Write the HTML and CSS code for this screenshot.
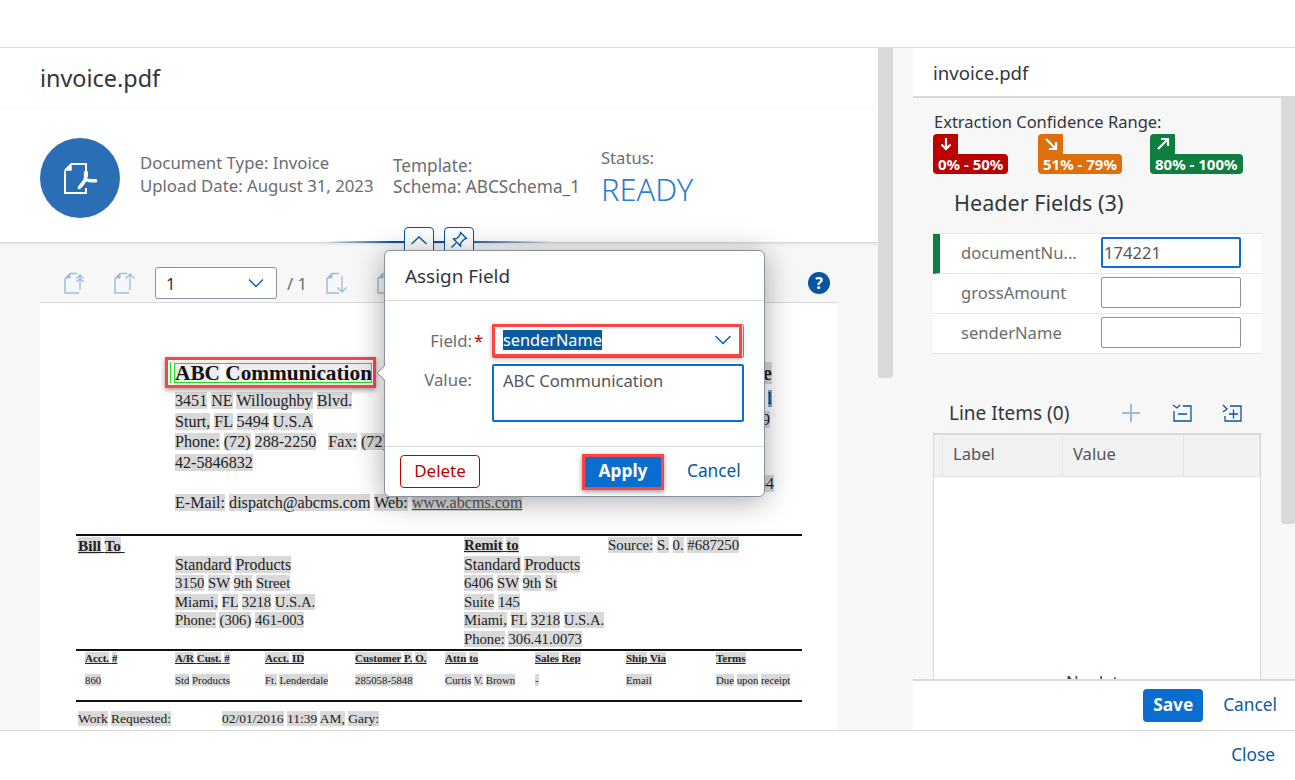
FILE: index.html
```html
<!DOCTYPE html>
<html lang="en">
<head>
    <meta charset="UTF-8">
    <title>invoice.pdf</title>
    <link rel="stylesheet" href="styles.css">
</head>
<body>
    <div class="dialog">
        <div class="dialog-header"></div>

        <div class="dialog-body">
            <div class="doc-pane">
                <div class="doc-title">invoice.pdf</div>

                <div class="object-header">
                    <div class="doc-avatar">
                        <svg width="36" height="34" viewBox="0 0 36 34">
                            <path d="M9 3h15v7M24 27v5H3V10" fill="none" stroke="#fff" stroke-width="2"/>
                            <path d="M3 9l6-6v6z" fill="#fff" stroke="#fff" stroke-width="1.500" stroke-linejoin="round"/>
                            <path d="M22.500 11.500c0-1.500 3-1.500 3 0 0 2-.4 4.500-.9 6.500 2.500 .5 6 .5 9 .5 1.500 0 1.500 2.500 0 2.500-3.500 0-7-.5-9.500-1.200-1.500 2.500-4 6-6 7.500-1.500 1-2.500-.5-1.500-1.500 1.500-2 4-4.800 5.400-7.200 .5-2 .5-5 .5-7.100z" fill="#fff" stroke="#fff" stroke-width="1.200"/>
                        </svg>
                    </div>
                    <div class="info-col info-first">
                        <div>Document Type: Invoice</div>
                        <div>Upload Date: August 31, 2023</div>
                    </div>
                    <div class="info-col info-second">
                        <div>Template:</div>
                        <div>Schema: ABCSchema_1</div>
                    </div>
                    <div class="info-col info-status">
                        <div>Status:</div>
                        <div class="status-value">READY</div>
                    </div>
                </div>

                <div class="viewer-toolbar">
                    <svg class="page-icon first-up" width="22" height="22" viewBox="0 0 22 22">
                        <path d="M6 1.500h7M1 6v15h14" fill="none" stroke="#9dbcdc" stroke-width="1.500"/>
                        <path d="M1 6l5-5v5z" fill="#9dbcdc" stroke="#9dbcdc"/>
                        <path d="M16 18V4M12.500 6.500L16 3l3.500 3.500M12.500 10L16 6.500l3.500 3.500" fill="none" stroke="#9dbcdc" stroke-width="1.300"/>
                    </svg>
                    <svg class="page-icon prev-up" width="22" height="22" viewBox="0 0 22 22">
                        <path d="M6 1.500h7M1 6v15h14" fill="none" stroke="#9dbcdc" stroke-width="1.500"/>
                        <path d="M1 6l5-5v5z" fill="#9dbcdc" stroke="#9dbcdc"/>
                        <path d="M16 18V2M11.500 6.500L16 2l4.500 4.500" fill="none" stroke="#9dbcdc" stroke-width="1.300"/>
                    </svg>
                    <div class="page-select">
                        <span>1</span>
                        <svg width="16" height="10" viewBox="0 0 16 10"><path d="M1 1.500l7 7 7-7" fill="none" stroke="#0854a0" stroke-width="1.300"/></svg>
                    </div>
                    <span class="page-total">/ 1</span>
                    <svg class="page-icon next-down" width="22" height="22" viewBox="0 0 22 22">
                        <path d="M6 1.500h7M1 6v15h12" fill="none" stroke="#9dbcdc" stroke-width="1.500"/>
                        <path d="M1 6l5-5v5z" fill="#9dbcdc" stroke="#9dbcdc"/>
                        <path d="M16 4v16M11.500 15.500L16 20l4.500-4.500" fill="none" stroke="#9dbcdc" stroke-width="1.300"/>
                    </svg>
                    <svg class="page-icon last-down" width="22" height="22" viewBox="0 0 22 22">
                        <path d="M6 1.500h7M1 6v15h12" fill="none" stroke="#9dbcdc" stroke-width="1.500"/>
                        <path d="M1 6l5-5v5z" fill="#9dbcdc" stroke="#9dbcdc"/>
                    </svg>
                    <span class="help-icon">?</span>
                </div>

                <div class="pdf-area">
                    <div class="pdf-page">
                        <div class="pdf-top">
                            <div class="pdf-sender">
                                <div class="pdf-company">
                                    <span class="company-mark">
                                        <span class="company-cursor"></span>
                                        <span class="company-name">ABC</span> <span class="company-name">Communication</span>
                                    </span>
                                </div>
                                <div class="pdf-line"><span>3451</span> <span>NE</span> <span>Willoughby</span> <span>Blvd.</span></div>
                                <div class="pdf-line"><span>Sturt,</span> <span>FL</span> <span>5494</span> <span>U.S.A</span></div>
                                <div class="pdf-line"><span>Phone:</span> <span>(72)</span> <span>288-2250</span> &nbsp; <span>Fax:</span> <span>(72)</span></div>
                                <div class="pdf-line"><span>42-5846832</span></div>
                                <div class="pdf-line pdf-mail"><span>E-Mail:</span> <span>dispatch@abcms.com</span> <span>Web:</span> <span class="pdf-link">www.abcms.com</span></div>
                            </div>
                            <div class="pdf-edge">
                                <div class="edge-bold"><span>e</span></div>
                                <div class="edge-line edge-blue"><span>l</span></div>
                                <div class="edge-line edge-nine"><span>9</span></div>
                                <div class="edge-line edge-last"><span>54</span></div>
                            </div>
                        </div>

                        <div class="pdf-rule"></div>
                        <div class="pdf-parties">
                            <div class="party-bill">
                                <div class="party-head bill-head"><span>Bill</span> <span>To</span>&nbsp;</div>
                                <div class="party-lines">
                                    <div class="party-line party-name"><span>Standard</span> <span>Products</span></div>
                                    <div class="party-line"><span>3150</span> <span>SW</span> <span>9th</span> <span>Street</span></div>
                                    <div class="party-line"><span>Miami,</span> <span>FL</span> <span>3218</span> <span>U.S.A.</span></div>
                                    <div class="party-line"><span>Phone:</span> <span>(306)</span> <span>461-003</span></div>
                                </div>
                            </div>
                            <div class="party-remit">
                                <div class="party-head remit-head"><span>Remit</span> <span>to</span></div>
                                <div class="party-line party-name"><span>Standard</span> <span>Products</span></div>
                                <div class="party-line"><span>6406</span> <span>SW</span> <span>9th</span> <span>St</span></div>
                                <div class="party-line"><span>Suite</span> <span>145</span></div>
                                <div class="party-line"><span>Miami,</span> <span>FL</span> <span>3218</span> <span>U.S.A.</span></div>
                                <div class="party-line"><span>Phone:</span> <span>306.41.0073</span></div>
                            </div>
                            <div class="party-source party-line"><span>Source:</span> <span>S.</span> <span>0.</span> <span>#687250</span></div>
                        </div>
                        <div class="pdf-rule"></div>

                        <div class="order-grid">
                            <b><span>Acct.</span> <span>#</span></b>
                            <b><span>A/R</span> <span>Cust.</span> <span>#</span></b>
                            <b><span>Acct.</span> <span>ID</span></b>
                            <b><span>Customer</span> <span>P.</span> <span>O.</span></b>
                            <b><span>Attn</span> <span>to</span></b>
                            <b><span>Sales</span> <span>Rep</span></b>
                            <b><span>Ship</span> <span>Via</span></b>
                            <b><span>Terms</span></b>
                            <div><span>860</span></div>
                            <div><span>Std</span> <span>Products</span></div>
                            <div><span>Ft.</span> <span>Lenderdale</span></div>
                            <div><span>285058-5848</span></div>
                            <div><span>Curtis</span> <span>V.</span> <span>Brown</span></div>
                            <div><span>-</span></div>
                            <div><span>Email</span></div>
                            <div class="no-wrap"><span>Due</span> <span>upon</span> <span>receipt</span></div>
                        </div>
                        <div class="pdf-rule order-rule"></div>

                        <div class="work-row">
                            <div class="work-label"><span>Work</span> <span>Requested:</span></div>
                            <div><span>02/01/2016</span> <span>11:39</span> <span>AM,</span> <span>Gary:</span></div>
                        </div>
                    </div>
                </div>
            </div>

            <div class="doc-scroll"><div class="doc-thumb"></div></div>
            <div class="pane-gap"></div>

            <div class="fields-pane">
                <div class="fields-title">invoice.pdf</div>
                <div class="fields-middle">
                    <div class="fields-content">
                        <div class="range-label">Extraction Confidence Range:</div>
                        <div class="range-chips">
                            <div class="chip chip-red">
                                <div class="chip-tab">
                                    <svg width="14" height="14" viewBox="0 0 14 14"><path d="M7 1v11M2.500 7.500L7 12l4.500-4.500" fill="none" stroke="#fff" stroke-width="2.200"/></svg>
                                </div>
                                <div class="chip-text">0% - 50%</div>
                            </div>
                            <div class="chip chip-orange">
                                <div class="chip-tab">
                                    <svg width="14" height="14" viewBox="0 0 14 14"><path d="M2 2l10 10M5 12h7V5" fill="none" stroke="#fff" stroke-width="2.200"/></svg>
                                </div>
                                <div class="chip-text">51% - 79%</div>
                            </div>
                            <div class="chip chip-green">
                                <div class="chip-tab">
                                    <svg width="14" height="14" viewBox="0 0 14 14"><path d="M2 12L12 2M5 2h7v7" fill="none" stroke="#fff" stroke-width="2.200"/></svg>
                                </div>
                                <div class="chip-text">80% - 100%</div>
                            </div>
                        </div>

                        <h3 class="header-fields">Header Fields (3)</h3>
                        <div class="field-rows">
                            <div class="field-row field-row-ok">
                                <span class="field-name">documentNu...</span>
                                <div class="field-input field-input-focus">174221</div>
                            </div>
                            <div class="field-row">
                                <span class="field-name">grossAmount</span>
                                <div class="field-input"></div>
                            </div>
                            <div class="field-row">
                                <span class="field-name">senderName</span>
                                <div class="field-input"></div>
                            </div>
                        </div>

                        <div class="line-items-bar">
                            <span class="line-items-title">Line Items (0)</span>
                            <svg class="bar-icon" width="20" height="20" viewBox="0 0 20 20"><path d="M10 1v18M1 10h18" fill="none" stroke="#9dbcdc" stroke-width="2"/></svg>
                            <svg class="bar-icon" width="20" height="18" viewBox="0 0 20 18"><path d="M1 1l4 3 3-3M11 2h8v15H2V7M6 10h9" fill="none" stroke="#0854a0" stroke-width="1.300"/></svg>
                            <svg class="bar-icon" width="20" height="18" viewBox="0 0 20 18"><path d="M1 1l4 4-4 3M8 2h11v15H3v-5M7 10h9M11.500 5.500v9" fill="none" stroke="#0854a0" stroke-width="1.300"/></svg>
                        </div>
                        <div class="items-table">
                            <div class="items-head">
                                <div class="items-sel"></div>
                                <div class="items-col items-label">Label</div>
                                <div class="items-col items-value">Value</div>
                                <div class="items-col items-rest"></div>
                            </div>
                            <div class="items-empty">No data</div>
                        </div>
                    </div>
                    <div class="fields-scroll"><div class="fields-thumb"></div></div>
                </div>
                <div class="fields-footer">
                    <button class="btn-save">Save</button>
                    <a class="link-btn">Cancel</a>
                </div>
            </div>

            <div class="collapse-bar">
                <button class="collapse-btn">
                    <svg width="18" height="10" viewBox="0 0 18 10"><path d="M1.500 9l7.500-7 7.500 7" fill="none" stroke="#0854a0" stroke-width="1.300"/></svg>
                </button>
                <button class="collapse-btn">
                    <svg width="18" height="18" viewBox="0 0 18 18"><path d="M10.500 1.500l6 6-2 .5-3.500 3.500-.5 3.500-7-7 3.500-.5L10 4zM6 12l-4.500 4.500" fill="none" stroke="#0854a0" stroke-width="1.300"/></svg>
                </button>
            </div>

            <div class="assign-popover">
                <div class="popover-arrow"></div>
                <div class="popover-title">Assign Field</div>
                <div class="popover-form">
                    <div class="form-row">
                        <span class="form-label">Field:<em>*</em></span>
                        <div class="form-select">
                            <span class="form-selected">senderName</span>
                            <svg width="18" height="10" viewBox="0 0 18 10"><path d="M1.500 1l7.500 7.500L16.500 1" fill="none" stroke="#0854a0" stroke-width="1.300"/></svg>
                        </div>
                    </div>
                    <div class="form-row form-row-value">
                        <span class="form-label">Value:</span>
                        <div class="form-area">ABC Communication</div>
                    </div>
                </div>
                <div class="popover-footer">
                    <button class="btn-delete">Delete</button>
                    <button class="btn-apply">Apply</button>
                    <a class="link-btn">Cancel</a>
                </div>
            </div>
        </div>

        <div class="dialog-footer">
            <a class="link-btn">Close</a>
        </div>
    </div>
</body>
</html>
```

FILE: styles.css
```css
* {
    box-sizing: border-box;
}
body {
    margin: 0;
    font-family: 'Noto Sans', 'Open Sans', sans-serif;
    font-size: 16.600px;
    color: #32363a;
    background: #fff;
    overflow: hidden;
}
.dialog {
    display: flex;
    flex-direction: column;
    height: 780px;
    overflow: hidden;
}
.dialog-header {
    flex: none;
    height: 48px;
    border-bottom: 1px solid #d9d9d9;
}
.dialog-body {
    flex: none;
    height: 682px;
    display: flex;
    position: relative;
    background: #f7f7f7;
}
.dialog-footer {
    flex: none;
    height: 50px;
    border-top: 1px solid #d9d9d9;
    display: flex;
    align-items: center;
    justify-content: flex-end;
    padding: 0 20px 2px 0;
}
.link-btn {
    color: #0a5aa5;
    font-size: 17.300px;
}
button {
    font-family: inherit;
    padding: 0 0 2px;
}

/* left side */
.doc-pane {
    flex: none;
    width: 878px;
    display: flex;
    flex-direction: column;
    overflow: hidden;
}
.doc-title {
    flex: none;
    height: 60px;
    padding: 11px 40px 0;
    background: #fff;
    border-bottom: 1px solid #fafafa;
    font-size: 23.400px;
    line-height: 38px;
}
.object-header {
    flex: none;
    height: 135px;
    background: #fff;
    display: flex;
    padding: 30px 0 0 40px;
    color: #6a6d70;
    border-bottom: 1px solid #d9d9d9;
    box-shadow: 0 1px 3px rgba(0, 0, 0, 0.1);
    position: relative;
}
.doc-avatar {
    width: 80px;
    height: 80px;
    border-radius: 50%;
    background: #2a6eb5;
    display: flex;
    align-items: center;
    justify-content: center;
}
.info-col {
    line-height: 23px;
    white-space: nowrap;
}
.info-first {
    width: 233px;
    margin: 13px 0 0 20px;
    font-size: 16.750px;
}
.info-second {
    width: 187px;
    margin: 17px 0 0 20px;
    font-size: 17.200px;
    line-height: 21px;
}
.info-status {
    margin: 8px 0 0 21px;
}
.status-value {
    color: #2b7cd3;
    font-size: 30.800px;
    font-weight: 300;
    line-height: 38px;
    margin-top: 1px;
}
.viewer-toolbar {
    flex: none;
    height: 59px;
    display: flex;
    align-items: center;
    padding: 21px 48px 0 64px;
}
.page-icon {
    flex: none;
}
.prev-up {
    margin-left: 28px;
}
.page-select {
    width: 122px;
    height: 32px;
    margin-left: 19px;
    background: #fff;
    border: 1px solid #89919a;
    border-radius: 3px;
    display: flex;
    align-items: center;
    justify-content: space-between;
    padding: 0 12px 0 10px;
}
.page-total {
    margin-left: 10px;
    color: #6a6d70;
}
.next-down {
    margin-left: 19px;
}
.last-down {
    margin-left: 29px;
}
.help-icon {
    margin-left: auto;
    width: 22px;
    height: 22px;
    border-radius: 50%;
    background: #0854a0;
    color: #fff;
    font-size: 16px;
    font-weight: 700;
    line-height: 22px;
    text-align: center;
}

/* pdf page */
.pdf-area {
    flex: 1;
    padding: 0 40px;
    min-height: 0;
}
.pdf-page {
    width: 798px;
    height: 100%;
    overflow: hidden;
    background: #fff;
    border-top: 1px solid #d9d9d9;
    font-family: 'Liberation Serif', serif;
    color: #222;
}
.pdf-page span {
    background: #d9d9d9;
}
.pdf-top {
    display: flex;
    justify-content: space-between;
    height: 231px;
    padding: 57px 66px 0 135px;
}
.pdf-company {
    height: 31px;
    font-size: 21.300px;
    font-weight: 700;
    line-height: 26px;
    white-space: nowrap;
}
.pdf-page .company-mark {
    display: inline-block;
    position: relative;
    background: none;
}
.pdf-page .company-name {
    background: #eee;
    color: #111;
}
.pdf-page .company-cursor {
    position: absolute;
    left: -10px;
    right: -4px;
    top: -3px;
    bottom: -2px;
    border: 3px solid #ff4444;
    background: none;
    box-shadow: 0 2px 5px rgba(0, 0, 0, 0.4);
}
.company-cursor::before {
    content: "";
    position: absolute;
    left: 2px;
    width: 1px;
    top: 2px;
    bottom: 2px;
    background: #22dd22;
}
.company-cursor::after {
    content: "";
    position: absolute;
    left: 6px;
    right: 1px;
    top: 3px;
    bottom: 2px;
    border: 1px solid #22dd22;
}
.pdf-line {
    font-size: 16.100px;
    line-height: 20.700px;
    white-space: nowrap;
}
.pdf-mail {
    margin-top: 19.500px;
}
.pdf-link {
    text-decoration: underline;
    color: #555;
}
.pdf-edge {
    font-size: 16.100px;
    line-height: 20.700px;
    text-align: right;
}
.edge-bold {
    font-size: 20px;
    font-weight: 700;
    line-height: 26px;
}
.edge-line {
    margin-top: 0;
}
.edge-blue {
    margin-top: 3px;
}
.pdf-page .edge-blue span {
    background: #7aa7d6;
}
.edge-nine {
    margin-right: 2px;
}
.edge-last {
    margin: 44px -2px 0 0;
}
.pdf-rule {
    width: 726px;
    height: 2px;
    margin-left: 36px;
    background: #111;
}
.pdf-parties {
    display: flex;
    height: 113px;
    padding-left: 38px;
}
.party-bill {
    width: 386px;
}
.party-remit {
    width: 144px;
}
.party-head {
    font-size: 14.800px;
    font-weight: 700;
    line-height: 19.500px;
    text-decoration: underline;
}
.bill-head {
    font-size: 15.300px;
}
.party-lines {
    padding-left: 97px;
}
.party-line {
    font-size: 14.700px;
    line-height: 18.500px;
    white-space: nowrap;
}
.party-name {
    font-size: 15.900px;
}
.party-source {
    font-size: 14.800px;
}
.order-grid {
    display: grid;
    grid-template-columns: 90px 90px 90px 90px 90px 91px 90px 90px;
    grid-template-rows: 14px 22px;
    padding-left: 45px;
    font-size: 10.800px;
    line-height: 14px;
}
.order-grid b {
    font-size: 11px;
    text-decoration: underline;
    white-space: nowrap;
}
.order-grid div {
    padding-top: 8px;
}
.no-wrap {
    white-space: nowrap;
}
.order-rule {
    margin-top: 13px;
}
.work-row {
    display: flex;
    padding: 8px 0 0 38px;
    font-size: 13.500px;
    line-height: 18px;
}
.work-label {
    width: 144px;
}

/* scrollbars */
.doc-scroll {
    flex: none;
    width: 15px;
}
.doc-thumb {
    height: 330px;
    background: #d9d9d9;
    border-radius: 0 0 3px 3px;
}
.pane-gap {
    flex: none;
    width: 20px;
}

/* right side */
.fields-pane {
    flex: 1;
    display: flex;
    flex-direction: column;
    min-width: 0;
}
.fields-title {
    flex: none;
    height: 50px;
    padding-left: 20px;
    background: #fff;
    border-bottom: 2px solid #d9d9d9;
    font-size: 18.600px;
    line-height: 49px;
}
.fields-middle {
    flex: 1;
    min-height: 0;
    display: flex;
}
.fields-content {
    flex: 1;
    min-width: 0;
    overflow: hidden;
    padding: 13px 20px 0;
}
.fields-scroll {
    flex: none;
    width: 14px;
}
.fields-thumb {
    height: 426px;
    background: #d9d9d9;
    border-radius: 0 0 3px 3px;
}
.range-label {
    line-height: 22px;
    padding-left: 1px;
    font-size: 16.500px;
    white-space: nowrap;
}
.range-chips {
    display: flex;
    margin-top: 1px;
}
.chip {
    display: flex;
    flex-direction: column;
    align-items: flex-start;
    color: #fff;
    font-size: 15px;
    font-weight: 700;
    line-height: 20px;
}
.chip-tab {
    width: 25px;
    height: 20px;
    border-radius: 4px 0 0 0;
    display: flex;
    align-items: center;
    justify-content: center;
}
.chip-text {
    padding: 0 5px;
    border-radius: 0 4px 4px 4px;
    white-space: nowrap;
}
.chip-red .chip-tab,
.chip-red .chip-text {
    background: #bb0000;
}
.chip-orange .chip-tab,
.chip-orange .chip-text {
    background: #df6e0c;
}
.chip-green .chip-tab,
.chip-green .chip-text {
    background: #107e3e;
}
.chip-red {
    width: 105px;
}
.chip-orange {
    width: 112px;
}
.header-fields {
    margin: 14px 0 15px 21px;
    font-size: 21.600px;
    font-weight: 400;
    line-height: 30px;
}
.field-rows {
    width: 328px;
    border-top: 1px solid #e5e5e5;
}
.field-row {
    height: 40px;
    display: flex;
    align-items: center;
    padding: 0 0 2px 28px;
    background: #fff;
    border-bottom: 1px solid #e5e5e5;
}
.field-row-ok {
    border-left: 7px solid #107e3e;
    padding-left: 21px;
}
.field-name {
    width: 140px;
    color: #6a6d70;
}
.field-input {
    width: 140px;
    height: 31px;
    padding-left: 1px;
    border: 1px solid #89919a;
    border-radius: 2px;
    background: #fff;
    color: #555;
    line-height: 29px;
}
.field-input-focus {
    border: 2px solid #0a6ed1;
    line-height: 27px;
}
.line-items-bar {
    display: flex;
    align-items: center;
    height: 40px;
    margin-top: 39px;
    padding-left: 16px;
}
.line-items-title {
    flex: none;
    width: 172px;
    font-size: 19px;
}
.bar-icon {
    margin-right: 30px;
    flex: none;
}
.bar-icon:nth-child(2) {
    margin-right: 31px;
}
.bar-icon:last-child {
    margin-right: 0;
}
.items-table {
    width: 328px;
    height: 300px;
    background: #fff;
    border: 1px solid #d9d9d9;
    border-top-width: 2px;
}
.items-head {
    display: flex;
    height: 42px;
    background: #f2f2f2;
    border-bottom: 1px solid #e5e5e5;
    color: #51555a;
}
.items-sel {
    width: 9px;
    border-right: 1px solid #e5e5e5;
}
.items-col {
    padding-left: 10px;
    line-height: 38px;
    border-right: 1px solid #e5e5e5;
}
.items-label {
    width: 120px;
}
.items-value {
    width: 121px;
}
.items-rest {
    flex: 1;
}
.items-empty {
    padding-top: 195px;
    text-align: center;
    line-height: 20px;
}
.fields-footer {
    flex: none;
    height: 51px;
    background: #fff;
    border-top: 2px solid #d9d9d9;
    display: flex;
    align-items: center;
    justify-content: flex-end;
    gap: 20px;
    padding: 0 18px 0 0;
}
.fields-footer .link-btn {
    margin-top: -2px;
}
.btn-save {
    width: 60px;
    height: 33px;
    border: none;
    border-radius: 4px;
    background: #0a6ed1;
    color: #fff;
    font-size: 17.300px;
    font-weight: 700;
}

/* things lying over the pages */
.collapse-bar {
    position: absolute;
    left: 324px;
    top: 179px;
    width: 230px;
    display: flex;
    justify-content: center;
    gap: 10px;
    background: linear-gradient(90deg, rgba(8, 84, 160, 0), #0854a0 30%, #0854a0 60%, rgba(8, 84, 160, 0)) no-repeat 0 14px / 100% 2px;
}
.collapse-btn {
    width: 30px;
    height: 30px;
    background: #fff;
    border: 1px solid #0854a0;
    border-radius: 4px;
    display: flex;
    align-items: center;
    justify-content: center;
    padding-bottom: 4px;
}
.assign-popover {
    position: absolute;
    left: 384px;
    top: 202px;
    width: 381px;
    height: 247px;
    background: #fff;
    border: 1px solid #89919a;
    border-radius: 6px;
    box-shadow: 0 4px 30px rgba(0, 0, 0, 0.35);
    display: flex;
    flex-direction: column;
}
.popover-arrow {
    position: absolute;
    left: -6px;
    top: 116px;
    width: 12px;
    height: 12px;
    background: #fff;
    border-left: 1px solid #89919a;
    border-bottom: 1px solid #89919a;
    transform: rotate(45deg);
}
.popover-title {
    flex: none;
    height: 50px;
    padding-left: 20px;
    border-bottom: 1px solid #d9d9d9;
    font-size: 18.900px;
    line-height: 50px;
}
.popover-form {
    flex: 1;
    padding-top: 23px;
}
.form-row {
    display: flex;
    align-items: center;
}
.form-row-value {
    align-items: flex-start;
    margin-top: 6px;
}
.form-label {
    width: 107px;
    padding-right: 20px;
    text-align: right;
    color: #6a6d70;
    font-size: 16.800px;
    line-height: 32px;
    white-space: nowrap;
}
.form-label em {
    display: inline-block;
    width: 0;
    margin-right: -2px;
    padding-left: 2px;
    color: #bb0000;
    font-style: normal;
}
.form-select {
    position: relative;
    width: 252px;
    height: 34px;
    border: 1px solid #89919a;
    border-radius: 2px;
    display: flex;
    align-items: center;
    justify-content: space-between;
    padding: 0 11px 2px 10px;
}
.form-select::after {
    content: "";
    position: absolute;
    left: -1px;
    right: 1px;
    top: -1px;
    bottom: 0;
    border: 3px solid #ff4444;
    box-shadow: 0 2px 5px rgba(0, 0, 0, 0.3);
}
.form-selected {
    background: #0a5aa0;
    color: #fff;
    font-size: 16.300px;
    line-height: 20px;
}
.form-area {
    width: 252px;
    height: 58px;
    padding: 3px 9px;
    border: 2px solid #0a6ed1;
    border-radius: 2px;
    color: #51555a;
    line-height: 24px;
}
.popover-footer {
    flex: none;
    height: 50px;
    border-top: 1px solid #d9d9d9;
    display: flex;
    align-items: center;
    padding: 0 23px 0 15px;
}
.popover-footer .link-btn {
    margin-top: -2px;
}
.btn-delete {
    width: 80px;
    height: 33px;
    background: #fff;
    border: 1px solid #bb0000;
    border-radius: 4px;
    color: #bb0000;
    font-size: 17px;
}
.btn-apply {
    width: 82px;
    height: 36px;
    margin-left: 102px;
    margin-right: 23px;
    background: #0a6ed1;
    border: 3px solid #ff4444;
    color: #fff;
    font-size: 17.300px;
    font-weight: 700;
    box-shadow: 0 2px 5px rgba(0, 0, 0, 0.4);
}
```
